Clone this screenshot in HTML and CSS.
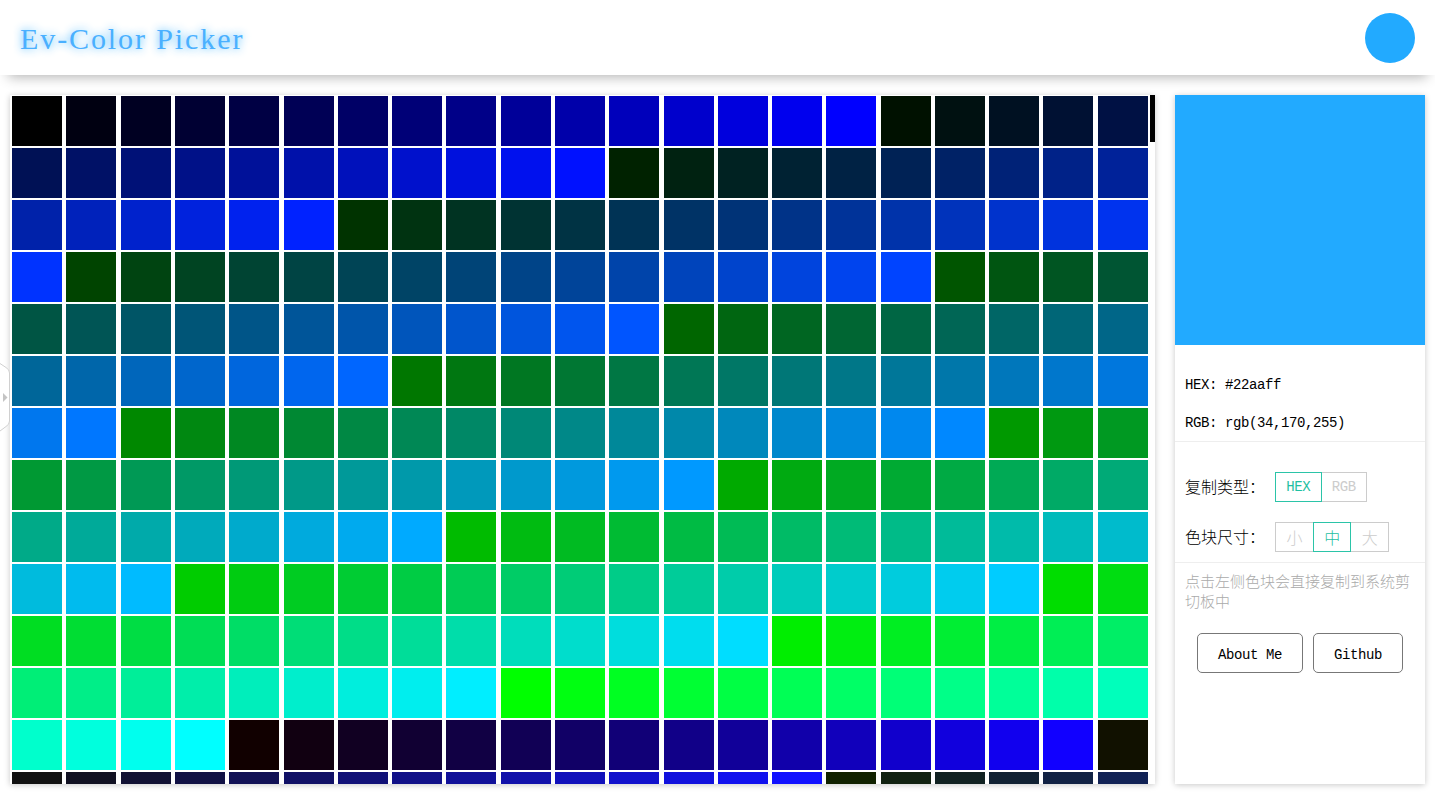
FILE: index.html
```html
<!DOCTYPE html>
<html lang="zh-CN">
<head>
<meta charset="utf-8">
<title>Ev-Color Picker</title>
<link rel="stylesheet" href="styles.css">
</head>
<body>
<header class="top">
  <h1 class="brand">Ev-Color Picker</h1>
  <div class="dot"></div>
</header>
<main class="main">
  <section class="board">
    <div class="grid" id="grid"></div>
    <div class="thumb" id="thumb"></div>
  </section>
  <aside class="side">
    <div class="swatch"></div>
    <div class="values">
      <p class="value">HEX: #22aaff</p>
      <p class="value">RGB: rgb(34,170,255)</p>
    </div>
    <div class="controls">
      <div class="row">
        <span class="label">复制类型：</span>
        <div class="seg">
          <span class="opt opt-w active">HEX</span>
          <span class="opt opt-w">RGB</span>
        </div>
      </div>
      <div class="row">
        <span class="label">色块尺寸：</span>
        <div class="seg">
          <span class="opt opt-n">小</span>
          <span class="opt opt-n active">中</span>
          <span class="opt opt-n">大</span>
        </div>
      </div>
    </div>
    <p class="tip">点击左侧色块会直接复制到系统剪切板中</p>
    <div class="links">
      <a class="link link-about">About Me</a>
      <a class="link link-git">Github</a>
    </div>
  </aside>
</main>
<svg class="tab" width="11" height="70" viewBox="0 0 11 70">
  <path d="M0 .5 L6 4.5 Q9.5 6.5 9.5 10 L9.5 58 Q9.5 61.5 6 63.5 L0 68" fill="#fff" stroke="#d0d0d0"/>
  <path d="M3 30 L7.5 34.5 L3 39 Z" fill="#c4c4c4"/>
</svg>
<script src="app.js"></script>
</body>
</html>
```
FILE: styles.css
```css
* { box-sizing: border-box; }
html, body { height: 100%; }
body {
  margin: 0;
  display: flex;
  flex-direction: column;
  overflow: hidden;
  background: #fff;
  color: #000;
  font-family: "Liberation Mono", "Noto Sans CJK SC", monospace;
  font-size: 14px;
}
.top {
  flex: none;
  height: 75px;
  padding: 0 20px;
  display: flex;
  align-items: center;
  justify-content: space-between;
  background: #fff;
  box-shadow: 0 10px 12px -8px rgba(0, 0, 0, .3);
  position: relative;
  z-index: 1;
}
.brand {
  margin: 3px 0 0;
  font-family: "Liberation Serif", serif;
  font-size: 30px;
  font-weight: 400;
  letter-spacing: 1.9px;
  color: #4ab0ff;
  text-shadow: 0 0 8px rgba(34, 170, 255, .9);
}
.dot {
  width: 50px;
  height: 50px;
  border-radius: 50%;
  background: #22aaff;
}
.main {
  flex: 1;
  min-height: 0;
  display: flex;
  gap: 20px;
  padding: 20px 10px 10px;
}
.board {
  flex: 1;
  min-width: 0;
  position: relative;
  padding-right: 5px;
  background: #fff;
  box-shadow: 0 1px 6px rgba(0, 0, 0, .22);
}
.grid {
  height: 100%;
  display: flex;
  flex-wrap: wrap;
  justify-content: space-around;
  align-content: flex-start;
  overflow-y: auto;
  scrollbar-width: none;
}
.thumb {
  position: absolute;
  top: 0;
  right: 0;
  width: 5px;
  background: #000;
}
.cell {
  width: 50px;
  height: 50px;
  margin: 1px 2px;
}
.side {
  flex: none;
  width: 250px;
  background: #fff;
  box-shadow: 0 1px 6px rgba(0, 0, 0, .22);
}
.swatch {
  height: 250px;
  background: #22aaff;
}
.values {
  padding: 31px 10px 9px;
  border-bottom: 1px solid #eee;
}
.value {
  margin: 0 0 20px;
  height: 18px;
  line-height: 18px;
  letter-spacing: -.4px;
  white-space: nowrap;
}
.value:last-child { margin-bottom: 0; }
.controls {
  padding: 30px 10px 10px;
  border-bottom: 1px solid #eee;
  display: flex;
  flex-direction: column;
  gap: 20px;
}
.row {
  display: flex;
  align-items: center;
  height: 30px;
}
.label {
  width: 90px;
  margin-top: -2px;
  font-size: 16px;
  font-family: "Noto Sans CJK SC", sans-serif;
  font-weight: 300;
}
.seg { display: flex; }
.opt {
  height: 30px;
  line-height: 28px;
  text-align: center;
  border: 1px solid #ccc;
  color: #ccc;
  letter-spacing: -.4px;
  font-size: 14px;
}
.opt + .opt { margin-left: -1px; }
.opt-w { width: 46.5px; }
.opt-n {
  width: 38.67px;
  font-size: 16px;
  font-weight: 300;
  font-family: "Noto Sans CJK SC", sans-serif;
}
.active {
  border-color: #2bc4a8;
  color: #1fc0a2;
  position: relative;
}
.tip {
  margin: 0;
  padding: 8px 10px 10px;
  font-size: 15px;
  line-height: 20px;
  color: #aaa;
  font-family: "Noto Sans CJK SC", sans-serif;
  font-weight: 300;
}
.links {
  padding-top: 12px;
  display: flex;
  justify-content: center;
  gap: 10px;
}
.link {
  height: 40px;
  line-height: 40px;
  padding-top: 1px;
  border: 1px solid #777;
  border-radius: 5px;
  text-align: center;
  letter-spacing: -.4px;
  white-space: nowrap;
}
.link-about { width: 106px; }
.link-git { width: 90px; }
.tab {
  position: absolute;
  left: 0;
  top: 363px;
  z-index: 2;
}
```
FILE: app.js
```js
(function () {
  var grid = document.getElementById('grid');
  var thumb = document.getElementById('thumb');
  var hex = '0123456789abcdef';
  var frag = document.createDocumentFragment();
  for (var r = 0; r < 16; r++) {
    for (var g = 0; g < 16; g++) {
      for (var b = 0; b < 16; b++) {
        var cell = document.createElement('div');
        cell.className = 'cell';
        cell.style.background = '#' + hex[r] + hex[r] + hex[g] + hex[g] + hex[b] + hex[b];
        frag.appendChild(cell);
      }
    }
  }
  grid.appendChild(frag);
  function syncThumb() {
    var ratio = grid.clientHeight / grid.scrollHeight;
    thumb.style.height = grid.clientHeight * ratio + 'px';
    thumb.style.top = grid.scrollTop * ratio + 'px';
  }
  grid.addEventListener('scroll', syncThumb);
  syncThumb();
})();
```
